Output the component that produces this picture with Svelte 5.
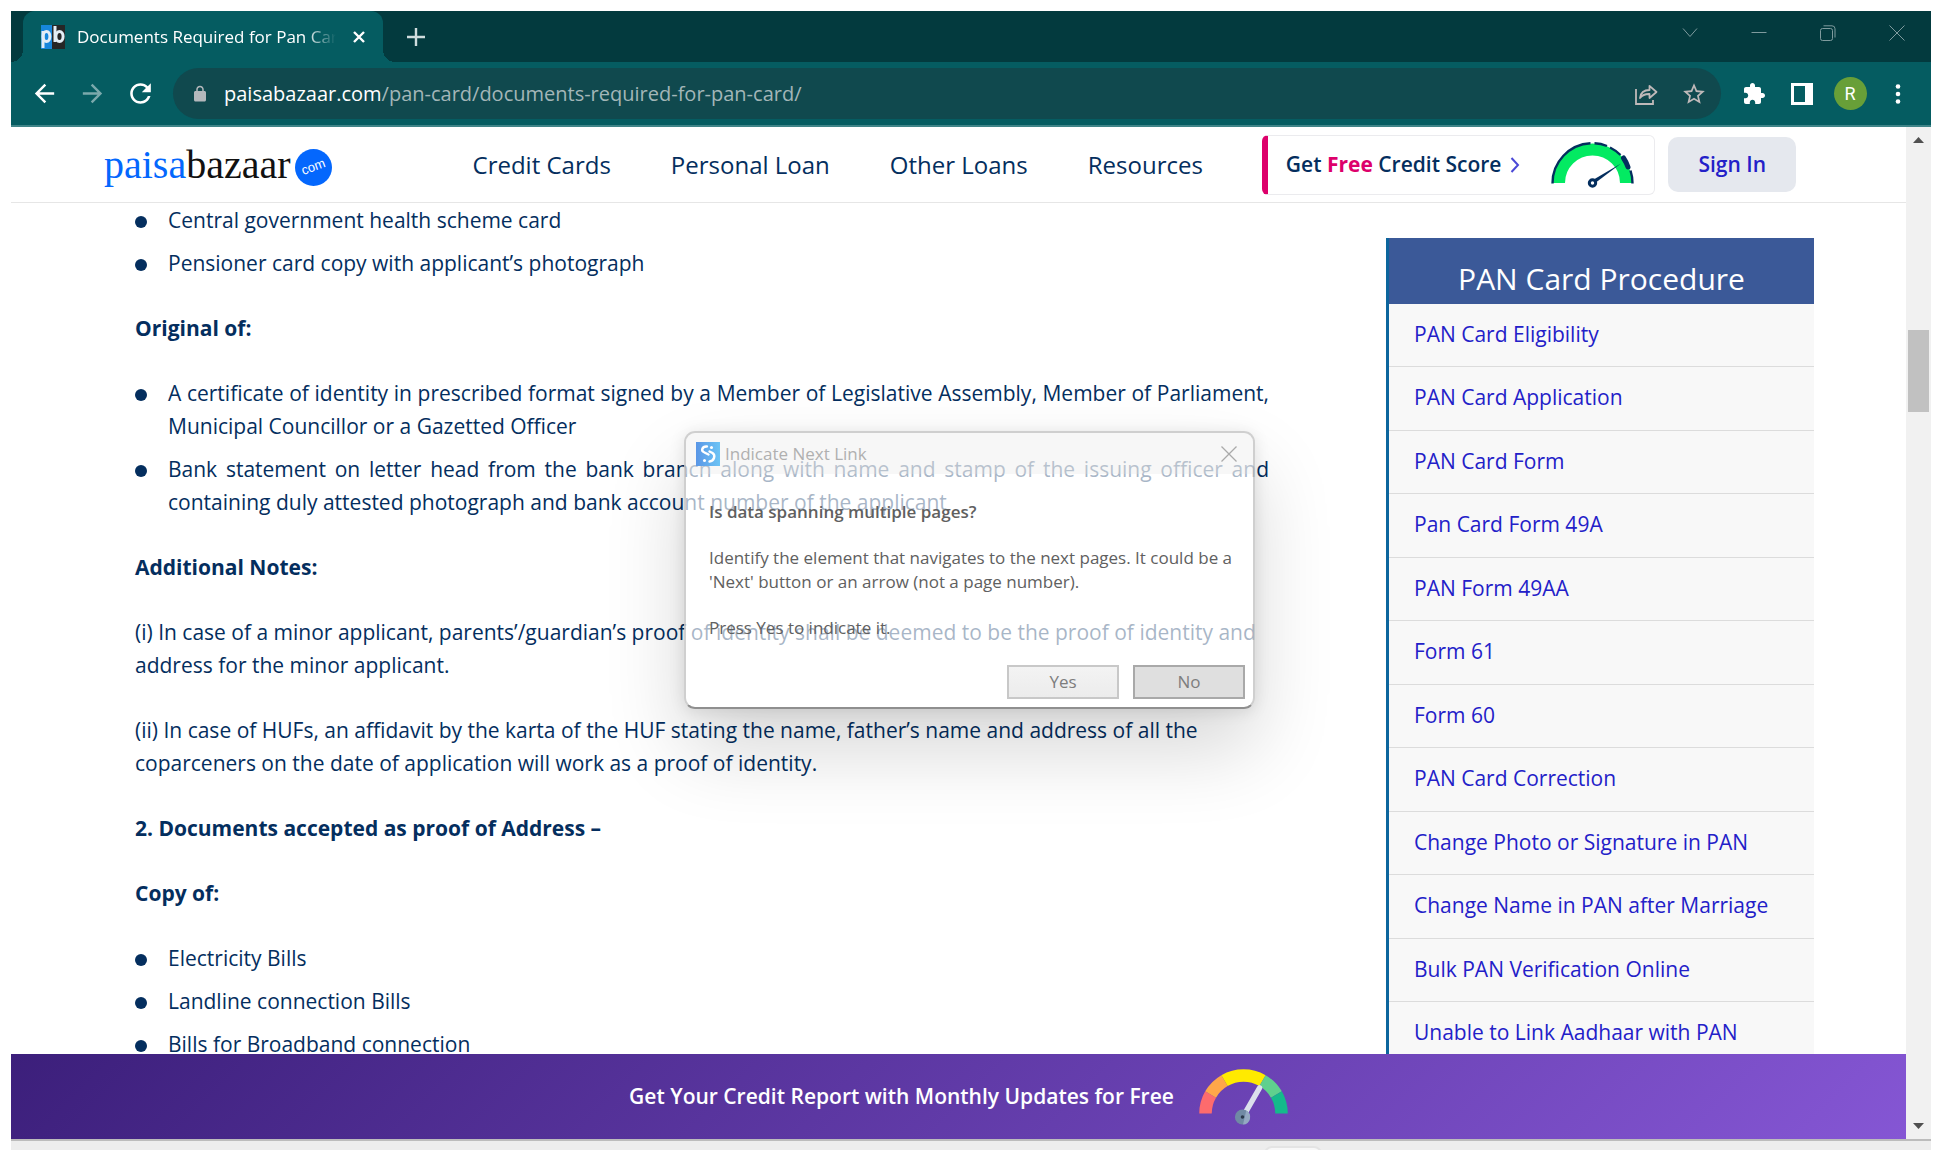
<script>
  const nav = ['Credit Cards', 'Personal Loan', 'Other Loans', 'Resources'];

  const procedures = [
    'PAN Card Eligibility',
    'PAN Card Application',
    'PAN Card Form',
    'Pan Card Form 49A',
    'PAN Form 49AA',
    'Form 61',
    'Form 60',
    'PAN Card Correction',
    'Change Photo or Signature in PAN',
    'Change Name in PAN after Marriage',
    'Bulk PAN Verification Online',
    'Unable to Link Aadhaar with PAN'
  ];

  let dialogOpen = $state(true);
</script>

<div class="desktop">
  <div class="browser">
    <div class="titlebar">
      <div class="tab">
        <svg class="favicon" viewBox="0 0 24 24" aria-hidden="true">
          <rect width="11" height="24" fill="#1787dc" />
          <rect x="11" width="13" height="24" fill="#262626" />
          <g fill="none" stroke="#e3edf5" stroke-width="3">
            <path d="M2 6v17" />
            <ellipse cx="5.500" cy="11.500" rx="3.400" ry="5" />
            <path d="M14 1v16" />
            <ellipse cx="18.500" cy="11.500" rx="3.600" ry="5" />
          </g>
        </svg>
        <span class="tab-title">Documents Required for Pan Card</span>
        <button class="plain" aria-label="Close tab">
          <svg width="12" height="12" viewBox="0 0 12 12"><path d="M1 1l10 10M11 1L1 11" stroke="#fff" stroke-width="2.400" /></svg>
        </button>
      </div>
      <button class="plain new-tab" aria-label="New tab">
        <svg width="18" height="18" viewBox="0 0 18 18"><path d="M9 0v18M0 9h18" stroke="#cfdcdd" stroke-width="2.400" /></svg>
      </button>
      <div class="window-controls">
        <button class="plain" aria-label="Search tabs">
          <svg width="16" height="16" viewBox="0 0 16 16"><path d="M1 3.500l7 8 7-8" /></svg>
        </button>
        <button class="plain" aria-label="Minimize">
          <svg width="16" height="16" viewBox="0 0 16 16"><path d="M.5 7.500h15" /></svg>
        </button>
        <button class="plain" aria-label="Restore">
          <svg width="16" height="16" viewBox="0 0 16 16"><rect x=".5" y="3.500" width="12" height="12" rx="2" /><path d="M3.500.8h8.500a3 3 0 0 1 3 3v8.700" /></svg>
        </button>
        <button class="plain" aria-label="Close window">
          <svg width="16" height="16" viewBox="0 0 16 16"><path d="M.5.5l15 15M15.500.5l-15 15" /></svg>
        </button>
      </div>
    </div>

    <div class="toolbar">
      <div class="tools">
        <button class="plain" aria-label="Back">
          <svg width="29" height="29" viewBox="0 0 24 24" fill="#fff"><path d="M20 11H7.830l5.590-5.590L12 4l-8 8 8 8 1.410-1.410L7.830 13H20v-2z" /></svg>
        </button>
        <button class="plain" aria-label="Forward">
          <svg width="29" height="29" viewBox="0 0 24 24" fill="#7ba9ac"><path d="M12 4l-1.410 1.410L16.170 11H4v2h12.170l-5.580 5.590L12 20l8-8z" /></svg>
        </button>
        <button class="plain" aria-label="Reload">
          <svg width="31" height="31" viewBox="0 0 24 24" fill="#fff"><path d="M17.650 6.350C16.200 4.900 14.210 4 12 4c-4.420 0-7.990 3.580-7.990 8s3.570 8 7.990 8c3.730 0 6.840-2.550 7.730-6h-2.080c-.82 2.330-3.040 4-5.650 4-3.310 0-6-2.690-6-6s2.690-6 6-6c1.660 0 3.140.69 4.220 1.780L13 11h7V4l-2.350 2.350z" /></svg>
        </button>
      </div>
      <div class="address">
        <svg width="18" height="18" viewBox="0 0 24 24" fill="#b4b8bc" aria-hidden="true"><path d="M18 8h-1V6c0-2.760-2.240-5-5-5S7 3.240 7 6v2H6c-1.100 0-2 .9-2 2v10c0 1.100.9 2 2 2h12c1.100 0 2-.9 2-2V10c0-1.100-.9-2-2-2zm-9 0V6c0-1.660 1.340-3 3-3s3 1.340 3 3v2H9z" /></svg>
        <span class="url"><b>paisabazaar.com</b>/pan-card/documents-required-for-pan-card/</span>
        <div class="tools">
          <button class="plain" aria-label="Share">
            <svg width="24" height="24" viewBox="0 0 24 24" fill="none" stroke="#bfb9b9" stroke-width="1.800"><path d="M2 7v15h17v-4" /><path d="M6 16c.6-5 3.400-8 9.500-8V3.800L22.500 10l-7 6v-4c-4-.2-7 .8-9.500 4z" stroke-linejoin="round" /></svg>
          </button>
          <button class="plain" aria-label="Bookmark this page">
            <svg width="26" height="26" viewBox="0 0 24 24" fill="#bfb9b9"><path d="M22 9.240l-7.190-.62L12 2 9.190 8.630 2 9.240l5.460 4.730L5.820 21 12 17.270 18.180 21l-1.630-7.030L22 9.240zM12 15.400l-3.760 2.270 1-4.280-3.320-2.880 4.380-.38L12 6.100l1.710 4.040 4.380.38-3.320 2.880 1 4.280L12 15.400z" /></svg>
          </button>
        </div>
      </div>
      <div class="tools">
        <button class="plain" aria-label="Extensions">
          <svg width="24" height="24" viewBox="0 0 24 24" fill="#fff"><path d="M20.500 11H19V7c0-1.100-.9-2-2-2h-4V3.500C13 2.120 11.880 1 10.500 1S8 2.120 8 3.500V5H4c-1.100 0-1.990.9-1.990 2v3.800H3.500c1.490 0 2.700 1.210 2.700 2.700s-1.210 2.700-2.700 2.700H2V20c0 1.100.9 2 2 2h3.800v-1.500c0-1.490 1.210-2.700 2.700-2.700 1.490 0 2.700 1.210 2.700 2.700V22H17c1.100 0 2-.9 2-2v-4h1.500c1.380 0 2.500-1.120 2.500-2.500S21.880 11 20.500 11z" /></svg>
        </button>
        <button class="plain" aria-label="Side panel">
          <svg width="22" height="22" viewBox="0 0 22 22"><rect x="1.500" y="1.500" width="19" height="19" fill="none" stroke="#fff" stroke-width="3" /><rect x="14" width="8" height="22" fill="#fff" /></svg>
        </button>
        <button class="plain" aria-label="Profile"><span class="avatar">R</span></button>
        <button class="plain" aria-label="Menu">
          <svg width="6" height="20" viewBox="0 0 6 20" fill="#fff"><circle cx="3" cy="2.500" r="2.300" /><circle cx="3" cy="10" r="2.300" /><circle cx="3" cy="17.500" r="2.300" /></svg>
        </button>
      </div>
    </div>

    <div class="viewport">
      <div class="page">
        <header>
          <a class="logo" href="#home" aria-label="paisabazaar.com">
            <span class="paisa">paisa</span><span class="bazaar">bazaar</span>
            <svg width="37" height="37" viewBox="0 0 37 37" aria-hidden="true">
              <circle cx="18.500" cy="18.500" r="18.500" fill="#0467fd" />
              <text x="18.500" y="22" text-anchor="middle" transform="rotate(-20 18.500 18.500)" fill="#fff" font-size="13" font-family="Liberation Sans, sans-serif">com</text>
            </svg>
          </a>
          <nav>
            {#each nav as item}
              <a href="#nav">{item}</a>
            {/each}
          </nav>
          <a class="score" href="#score">
            <span>Get <b>Free</b> Credit Score</span>
            <svg class="chevron" width="10" height="16" viewBox="0 0 10 16" aria-hidden="true"><path d="M1.500 1l6.500 7-6.500 7" fill="none" stroke="#4b49d6" stroke-width="2" /></svg>
            <svg width="83" height="46" viewBox="0 0 83 46" aria-hidden="true">
              <path d="M8 41a33.500 33.500 0 0 1 67 0" fill="none" stroke="#03ea62" stroke-width="12" />
              <g fill="none" stroke="#042e5e" stroke-width="2.400">
                <path d="M1.500 41.500A40 40 0 0 1 39.500 1.300" />
                <path d="M43.500 1.300A40 40 0 0 1 56 4" />
                <path d="M59 5.500A40 40 0 0 1 69.500 13" />
                <path d="M79.500 28.500A40 40 0 0 1 81.500 41.500" />
                <path d="M72.500 16A40 40 0 0 1 77 25" stroke-width="5" stroke-linecap="round" />
              </g>
              <path d="M41 38.500L70 21.500 43.500 41.500z" fill="#042e5e" />
              <circle cx="41.500" cy="41" r="3.200" fill="#fff" stroke="#042e5e" stroke-width="3" />
            </svg>
          </a>
          <a class="signin" href="#signin">Sign In</a>
        </header>

        <div class="columns">
          <article>
            <ul>
              <li>Central government health scheme card</li>
              <li>Pensioner card copy with applicant’s photograph</li>
            </ul>
            <h3>Original of:</h3>
            <ul>
              <li>A certificate of identity in prescribed format signed by a Member of Legislative Assembly, Member of Parliament, Municipal Councillor or a Gazetted Officer</li>
              <li>Bank statement on letter head from the bank branch along with name and stamp of the issuing officer and containing duly attested photograph and bank account number of the applicant</li>
            </ul>
            <h3>Additional Notes:</h3>
            <p>(i) In case of a minor applicant, parents’/guardian’s proof of identity shall be deemed to be the proof of identity and address for the minor applicant.</p>
            <p>(ii) In case of HUFs, an affidavit by the karta of the HUF stating the name, father’s name and address of all the coparceners on the date of application will work as a proof of identity.</p>
            <h3>2. Documents accepted as proof of Address –</h3>
            <h3>Copy of:</h3>
            <ul>
              <li>Electricity Bills</li>
              <li>Landline connection Bills</li>
              <li>Bills for Broadband connection</li>
            </ul>
          </article>

          <aside>
            <h2>PAN Card Procedure</h2>
            <ul>
              {#each procedures as item}
                <li><a href="#procedure">{item}</a></li>
              {/each}
            </ul>
          </aside>
        </div>

        <a class="banner" href="#report">
          <span>Get Your Credit Report with Monthly Updates for Free</span>
          <svg width="89" height="56" viewBox="0 0 89 56" aria-hidden="true">
            <g fill="none" stroke-width="12.500">
              <path d="M6.500 44.500A38 38 0 0 1 11.600 25.500" stroke="#fd6b6d" />
              <path d="M11.600 25.500A38 38 0 0 1 25.500 11.600" stroke="#fea74a" />
              <path d="M25.500 11.600A38 38 0 0 1 63.500 11.600" stroke="#ffea00" />
              <path d="M63.500 11.600A38 38 0 0 1 77.400 25.500" stroke="#5fd08e" />
              <path d="M77.400 25.500A38 38 0 0 1 82.500 44.500" stroke="#14ba8b" />
            </g>
            <path d="M45 46L60.500 19" stroke="#dbe0ec" stroke-width="5.500" stroke-linecap="round" />
            <circle cx="43.500" cy="48" r="7.600" fill="#708aa4" />
            <path d="M47.300 41.400A7.600 7.600 0 0 1 44 55.600z" fill="#94a9c2" />
            <circle cx="43.500" cy="48" r="1.800" fill="#2c3a4c" />
          </svg>
        </a>
      </div>

      <div class="scrollbar" aria-hidden="true">
        <svg width="11" height="6" viewBox="0 0 11 6"><path d="M0 6L5.500 0 11 6z" fill="#505050" /></svg>
        <div class="track"><div class="thumb"></div></div>
        <svg width="11" height="6" viewBox="0 0 11 6"><path d="M0 0l5.500 6L11 0z" fill="#505050" /></svg>
      </div>
    </div>

    <div class="underlay"><div class="handle"></div></div>

    {#if dialogOpen}
      <div class="dialog" role="dialog" aria-labelledby="dialog-title">
        <div class="dialog-bar">
          <svg width="24" height="24" viewBox="0 0 24 24" aria-hidden="true">
            <defs><linearGradient id="icon-fill" x2="1" y2="0"><stop offset="0" stop-color="#5a96e6" /><stop offset="1" stop-color="#6cc4f5" /></linearGradient></defs>
            <rect width="24" height="24" fill="url(#icon-fill)" />
            <g fill="none" stroke="#fff" stroke-width="2.400" stroke-linecap="round">
              <path d="M11 4.500C6 4 4.500 9 8.500 10.500l4 2" />
              <path d="M13.500 9.500l3 1.500C20 13.500 18 19 13.500 19.500" />
            </g>
            <circle cx="15.500" cy="5.500" r="1.500" fill="#fff" /><circle cx="8.500" cy="18.500" r="1.500" fill="#fff" />
          </svg>
          <span id="dialog-title">Indicate Next Link</span>
          <button class="plain" aria-label="Close" onclick={() => (dialogOpen = false)}>
            <svg width="16" height="16" viewBox="0 0 16 16"><path d="M.5.5l15 15M15.500.5l-15 15" stroke="#aaa" stroke-width="1.300" /></svg>
          </button>
        </div>
        <div class="dialog-body">
          <strong>Is data spanning multiple pages?</strong>
          <p>Identify the element that navigates to the next pages. It could be a 'Next' button or an arrow (not a page number).</p>
          <p>Press Yes to indicate it.</p>
          <div class="actions">
            <button>Yes</button>
            <button class="default">No</button>
          </div>
        </div>
      </div>
    {/if}
  </div>
</div>

<style>
  :global(body) {
    margin: 0;
    background: #fff;
  }
  .desktop {
    box-sizing: border-box;
    height: 100vh;
    padding: 11px 11px 0;
    overflow: hidden;
    font-family: 'Open Sans', 'Noto Sans', sans-serif;
    font-size: 21px;
    line-height: 33px;
    color: #042e5e;
  }
  .browser {
    position: relative;
    display: flex;
    flex-direction: column;
    height: 100%;
  }
  a {
    color: inherit;
    text-decoration: none;
  }
  svg {
    display: block;
    flex: none;
  }
  h2,
  h3,
  p,
  ul {
    margin: 0;
    padding: 0;
  }
  ul {
    list-style: none;
  }
  .plain {
    display: flex;
    align-items: center;
    justify-content: center;
    padding: 0;
    border: 0;
    background: none;
    font: inherit;
  }

  .titlebar {
    display: flex;
    flex: none;
    height: 51px;
    padding-left: 12px;
    background: #033a3e;
  }
  .tab {
    position: relative;
    display: flex;
    align-items: center;
    box-sizing: border-box;
    width: 360px;
    padding: 0 18px;
    border-radius: 12px 12px 0 0;
    background: #055c61;
    color: #fff;
    font-size: 17px;
  }
  .tab::before,
  .tab::after {
    content: '';
    position: absolute;
    bottom: 0;
    width: 12px;
    height: 12px;
  }
  .tab::before {
    left: -12px;
    background: radial-gradient(circle at 0 0, #033a3e 12px, #055c61 12px);
  }
  .tab::after {
    right: -12px;
    background: radial-gradient(circle at 100% 0, #033a3e 12px, #055c61 12px);
  }
  .favicon {
    width: 24px;
    height: 24px;
    margin-right: 12px;
  }
  .tab-title {
    flex: 1;
    margin-right: 17px;
    overflow: hidden;
    white-space: nowrap;
    mask-image: linear-gradient(to right, #000 88%, transparent);
  }
  .new-tab {
    margin-left: 24px;
  }
  .window-controls {
    display: flex;
    height: 43px;
    margin-left: auto;
  }
  .window-controls button {
    width: 69px;
  }
  .window-controls svg {
    fill: none;
    stroke: #7f9b9e;
    stroke-width: 1;
  }

  .toolbar {
    display: flex;
    flex: none;
    align-items: center;
    gap: 9px;
    height: 63px;
    padding: 0 9px;
    border-bottom: 2px solid #3f8488;
    background: #055c61;
  }
  .tools {
    display: flex;
  }
  .tools button {
    width: 48px;
    height: 48px;
  }
  .address {
    display: flex;
    flex: 1;
    align-items: center;
    height: 51px;
    padding: 0 3px 0 18px;
    border-radius: 26px;
    background: #10494e;
  }
  .url {
    flex: 1;
    margin-left: 15px;
    color: #a3b6b8;
    font-size: 20px;
  }
  .url b {
    color: #fff;
    font-weight: 400;
  }
  .avatar {
    width: 33px;
    border-radius: 50%;
    background: #689f38;
    color: #fff;
    font-family: Roboto, sans-serif;
    font-size: 18px;
    text-align: center;
  }

  .viewport {
    display: flex;
    flex: 1;
    min-height: 0;
  }
  .page {
    display: flex;
    flex: 1;
    flex-direction: column;
    min-width: 0;
    background: #fff;
  }
  header {
    display: flex;
    flex: none;
    align-items: center;
    height: 75px;
    padding: 0 110px 0 93px;
    border-bottom: 1px solid #e6e6e6;
  }
  .logo {
    display: flex;
    align-items: center;
    font-family: 'Liberation Serif', serif;
    font-size: 40px;
  }
  .paisa {
    color: #0467fd;
  }
  .bazaar {
    color: #111;
  }
  .logo svg {
    margin: 5px 0 0 4px;
  }
  nav {
    display: flex;
    gap: 60px;
    margin: 0 auto 0 141px;
    font-size: 24px;
    white-space: nowrap;
  }
  .score {
    display: flex;
    align-items: center;
    box-sizing: border-box;
    height: 60px;
    margin-right: 13px;
    padding: 0 20px 0 18px;
    border: 1px solid #ebebee;
    border-left: 6px solid #dd006b;
    border-radius: 6px;
    font-weight: 600;
    white-space: nowrap;
  }
  .score b {
    color: #dd006b;
    font-weight: 700;
  }
  .chevron {
    margin: 0 31px 0 9px;
  }
  .signin {
    padding: 11px 30px;
    border-radius: 10px;
    background: #e5e8ee;
    color: #2320c8;
    font-weight: 600;
    white-space: nowrap;
  }

  .columns {
    display: flex;
    flex: 1;
    align-items: flex-start;
    justify-content: space-between;
    min-height: 0;
    padding: 0 92px 0 124px;
    overflow: hidden;
  }
  article {
    flex: 1;
    max-width: 1134px;
    padding-top: 1px;
  }
  article ul,
  article p {
    margin-bottom: 32px;
  }
  article li {
    position: relative;
    padding-left: 33px;
    text-align: justify;
  }
  article li + li {
    margin-top: 10px;
  }
  article li::before {
    content: '';
    position: absolute;
    top: 12px;
    left: 0;
    width: 12px;
    height: 12px;
    border-radius: 50%;
    background: #042e5e;
  }
  h3 {
    margin-bottom: 32px;
    font-size: 21px;
    font-weight: 700;
  }
  aside {
    flex: none;
    box-sizing: border-box;
    width: 428px;
    margin-top: 35px;
    border-left: 3px solid #0c659d;
    background: #f8f8f8;
  }
  h2 {
    padding: 21px 0 5px;
    background: #3b5998;
    color: #fff;
    font-size: 30px;
    font-weight: 400;
    line-height: 40px;
    text-align: center;
  }
  aside li {
    padding: 14px 25px 15px;
    border-bottom: 1px solid #dcdcdc;
    color: #2320c8;
  }
  aside li:nth-child(2n) {
    padding-bottom: 16px;
  }

  .banner {
    display: flex;
    flex: none;
    align-items: center;
    justify-content: center;
    gap: 25px;
    height: 85px;
    background: linear-gradient(135deg, #3c1f7b, #8556d4);
    color: #fff;
    font-weight: 600;
  }
  .scrollbar {
    display: flex;
    flex: none;
    flex-direction: column;
    align-items: center;
    box-sizing: border-box;
    width: 25px;
    padding: 10px 0;
    background: #f1f1f1;
  }
  .track {
    display: flex;
    flex: 1;
    flex-direction: column;
    padding-top: 187px;
  }
  .thumb {
    width: 21px;
    height: 82px;
    background: #c1c1c1;
  }
  .underlay {
    flex: none;
    box-sizing: border-box;
    height: 11px;
    padding-top: 5px;
    overflow: hidden;
    border-top: 2px solid #bcbcbc;
    background: #ededed;
  }
  .handle {
    width: 54px;
    height: 12px;
    margin-left: 1253px;
    border: 2px solid #e4e4e4;
    border-radius: 8px;
    background: #f8f8f8;
  }

  .dialog {
    position: absolute;
    top: 420px;
    left: 673px;
    box-sizing: border-box;
    width: 571px;
    overflow: hidden;
    border: 2px solid rgba(175, 175, 175, 0.6);
    border-bottom-color: #8f8f8f;
    border-radius: 11px;
    background: rgba(255, 255, 255, 0.65);
    box-shadow: 0 40px 80px rgba(0, 0, 0, 0.16), 0 2px 16px rgba(0, 0, 0, 0.1);
    color: #606060;
    font-size: 17px;
    line-height: 24px;
  }
  .dialog-bar {
    display: flex;
    align-items: center;
    gap: 5px;
    height: 41px;
    padding: 0 16px 0 10px;
    background: rgba(225, 225, 225, 0.28);
    color: #b0b0b0;
  }
  .dialog-bar button {
    margin-left: auto;
  }
  .dialog-body {
    padding: 26px 18px 8px 23px;
  }
  .dialog-body strong {
    font-weight: 600;
  }
  .dialog-body p {
    margin-top: 22px;
  }
  .actions {
    display: flex;
    justify-content: flex-end;
    gap: 14px;
    margin-top: 25px;
    margin-right: -10px;
  }
  .actions button {
    box-sizing: border-box;
    width: 112px;
    height: 34px;
    padding: 0;
    border: 2px solid #c8c8c8;
    background: linear-gradient(#f3f3f3, #ececec);
    color: #7d7d7d;
    font: inherit;
  }
  .actions .default {
    border-color: #a9a9a9;
    background: #dfdfdf;
  }
</style>
